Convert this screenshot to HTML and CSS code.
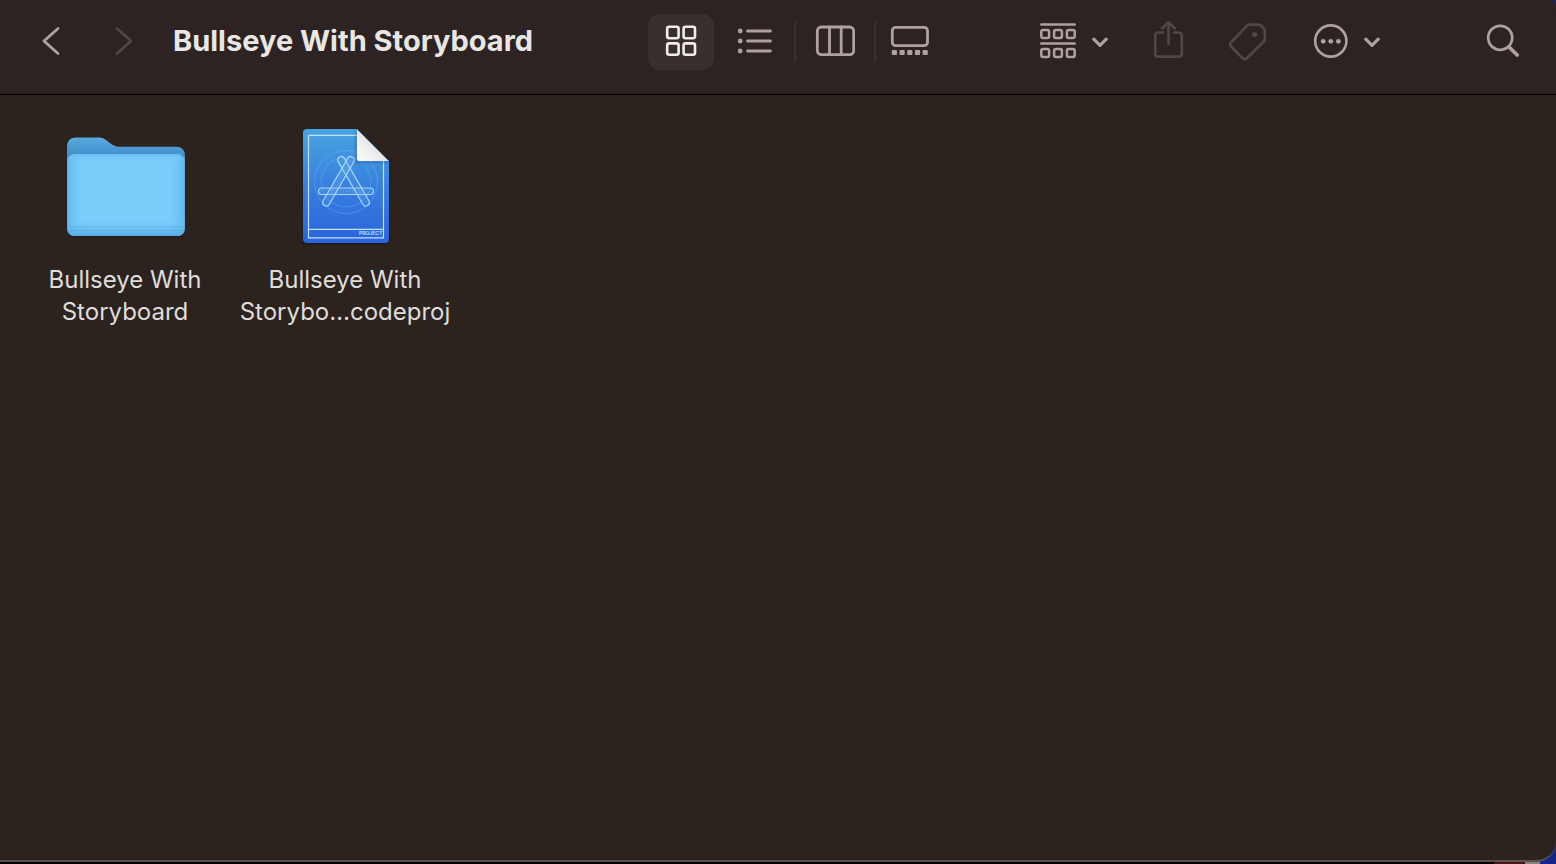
FILE: index.html
```html
<!DOCTYPE html>
<html lang="en">
<head>
<meta charset="utf-8">
<title>Bullseye With Storyboard</title>
<link rel="stylesheet" href="styles.css">
</head>
<body>
<main class="window">
  <header class="toolbar">
    <nav class="history" aria-label="History">
      <button class="tool nav-tool" aria-label="Back">
        <svg width="40" height="44" viewBox="0 0 40 44"><path d="M27 8.500L13 21L27 33.500" stroke-width="2.900"/></svg>
      </button>
      <button class="tool nav-tool" aria-label="Forward" disabled>
        <svg width="40" height="44" viewBox="0 0 40 44"><path d="M13 8.500L27 21L13 33.500" stroke-width="2.900"/></svg>
      </button>
    </nav>
    <h1 class="title">Bullseye With Storyboard</h1>
    <div class="views" role="group" aria-label="View">
      <button class="tool view-grid" aria-label="Icons" aria-pressed="true">
        <svg width="36" height="44" viewBox="0 0 36 44" stroke-width="2.600">
          <rect x="4.200" y="6.800" width="11.400" height="11.400" rx="2"/><rect x="20.600" y="6.800" width="11.400" height="11.400" rx="2"/>
          <rect x="4.200" y="23.400" width="11.400" height="11.400" rx="2"/><rect x="20.600" y="23.400" width="11.400" height="11.400" rx="2"/>
        </svg>
      </button>
      <button class="tool view-list" aria-label="List">
        <svg width="36" height="44" viewBox="0 0 36 44" stroke-width="2.800">
          <path d="M11.500 11H34.500M11.500 21H34.500M11.500 31H34.500"/>
          <g class="solid"><circle cx="4.200" cy="11" r="2.400"/><circle cx="4.200" cy="21" r="2.400"/><circle cx="4.200" cy="31" r="2.400"/></g>
        </svg>
      </button>
      <span class="divider"></span>
      <button class="tool view-columns" aria-label="Columns">
        <svg width="40" height="44" viewBox="0 0 40 44" stroke-width="2.800">
          <rect x="2.300" y="7" width="36.400" height="27.600" rx="4"/><path d="M14.500 7V34.500M26.200 7V34.500"/>
        </svg>
      </button>
      <span class="divider"></span>
      <button class="tool view-gallery" aria-label="Gallery">
        <svg width="40" height="44" viewBox="0 0 40 44" stroke-width="2.800">
          <rect x="2.300" y="7.300" width="35.200" height="18.400" rx="3.500"/>
          <g class="solid"><rect x="1.800" y="30" width="5.200" height="5" rx="1"/><rect x="9.500" y="30" width="5.200" height="5" rx="1"/><rect x="17.200" y="30" width="5.200" height="5" rx="1"/><rect x="24.900" y="30" width="5.200" height="5" rx="1"/><rect x="32.600" y="30" width="5.200" height="5" rx="1"/></g>
        </svg>
      </button>
    </div>
    <div class="actions">
      <button class="tool menu-tool" aria-label="Group by">
        <svg width="36" height="44" viewBox="0 0 36 44" stroke-width="2.500">
          <path d="M1.300 4.500H34.700M1.300 23.500H34.700"/>
          <rect x="1.300" y="10" width="7.800" height="8" rx="1.800"/><rect x="14.100" y="10" width="7.800" height="8" rx="1.800"/><rect x="26.900" y="10" width="7.800" height="8" rx="1.800"/>
          <rect x="1.300" y="29" width="7.800" height="8" rx="1.800"/><rect x="14.100" y="29" width="7.800" height="8" rx="1.800"/><rect x="26.900" y="29" width="7.800" height="8" rx="1.800"/>
        </svg>
        <svg width="16" height="44" viewBox="0 0 16 44" stroke-width="3.200"><path d="M1.800 19.200L8 25.400L14.200 19.200"/></svg>
      </button>
      <button class="tool share-tool" aria-label="Share" disabled>
        <svg width="42" height="44" viewBox="0 0 42 44" stroke-width="2.700">
          <path d="M15 12.500H10.500Q7.200 12.500 7.200 15.800V33.400Q7.200 36.700 10.500 36.700H30.500Q33.800 36.700 33.800 33.400V15.800Q33.800 12.500 30.500 12.500H26M20.500 24V2.800M14.300 8.200L20.500 2.200L26.700 8.200"/>
        </svg>
      </button>
      <button class="tool tag-tool" aria-label="Tags" disabled>
        <svg width="42" height="44" viewBox="0 0 42 44" stroke-width="2.700">
          <path d="M23.500 4.700H32.500Q34 4.700 35 5.700L37.800 8.500Q38.800 9.500 38.800 11V19Q38.800 20.500 37.800 21.500L20.800 38.200Q18.800 40.200 16.800 38.200L5 26.500Q3 24.500 5 22.500L21 5.700Q22 4.700 23.500 4.700Z"/>
          <circle class="solid" cx="28.500" cy="14.600" r="2.600"/>
        </svg>
      </button>
      <button class="tool menu-tool more-tool" aria-label="More actions">
        <svg width="34" height="44" viewBox="0 0 34 44" stroke-width="2.600">
          <circle cx="16.800" cy="21" r="15.600"/>
          <g class="solid"><circle cx="9.200" cy="21.300" r="2.400"/><circle cx="16.800" cy="21.300" r="2.400"/><circle cx="24.400" cy="21.300" r="2.400"/></g>
        </svg>
        <svg width="16" height="44" viewBox="0 0 16 44" stroke-width="3.200"><path d="M1.800 19.200L8 25.400L14.200 19.200"/></svg>
      </button>
      <button class="tool search-tool" aria-label="Search">
        <svg width="42" height="44" viewBox="0 0 42 44" stroke-width="2.700">
          <circle cx="18.200" cy="17.800" r="12"/><path d="M27 27L35.200 35" stroke-width="3.800"/>
        </svg>
      </button>
    </div>
  </header>
  <section class="files" aria-label="Files">
    <button class="file">
      <svg width="128" height="128" viewBox="0 0 128 128">
        <defs>
          <linearGradient id="back" x1="0" y1="0" x2="0" y2="1"><stop offset="0" stop-color="#59aadf"/><stop offset=".18" stop-color="#4390cc"/><stop offset="1" stop-color="#4390cc"/></linearGradient>
          <linearGradient id="sides"><stop offset="0" stop-color="#62b6ec"/><stop offset=".05" stop-color="#71c3f6"/><stop offset=".13" stop-color="#7dcdfc"/><stop offset=".87" stop-color="#7dcdfc"/><stop offset=".95" stop-color="#71c3f6"/><stop offset="1" stop-color="#62b6ec"/></linearGradient>
          <linearGradient id="front" x1="0" y1="0" x2="0" y2="1"><stop offset="0" stop-color="#69bcf0"/><stop offset=".1" stop-color="#7dcdfc" stop-opacity="0"/><stop offset=".78" stop-color="#7dcdfc" stop-opacity="0"/><stop offset="1" stop-color="#55aae2"/></linearGradient>
          <clipPath id="frontShape"><rect x="6.300" y="32" width="117.400" height="82" rx="7.500"/></clipPath>
        </defs>
        <rect class="shadow" x="7" y="34" width="116" height="81" rx="8"/>
        <path class="shape" fill="url(#back)" d="M6 25Q6 15.500 15 15.500H38C47 15.500 48 24.800 60 24.800H115Q124 24.800 124 34V106Q124 114 116 114H14Q6 114 6 106Z"/>
        <rect class="shape" fill="url(#sides)" x="6.300" y="32" width="117.400" height="82" rx="7.500"/>
        <rect class="shape" fill="url(#front)" x="6.300" y="32" width="117.400" height="82" rx="7.500"/>
        <g clip-path="url(#frontShape)"><path class="crease" d="M6 104.500H124M6 108.500H124"/></g>
      </svg>
      <span class="name">Bullseye With Storyboard</span>
    </button>
    <button class="file">
      <svg width="128" height="128" viewBox="0 0 128 128">
        <defs>
          <linearGradient id="paper" x1="0" y1="0" x2="0" y2="1"><stop offset="0" stop-color="#48a5df"/><stop offset=".5" stop-color="#387fdf"/><stop offset="1" stop-color="#2964dc"/></linearGradient>
          <linearGradient id="fold" x1="0" y1="1" x2=".6" y2=".4"><stop offset="0" stop-color="#fff"/><stop offset="1" stop-color="#e2e2e4"/></linearGradient>
          <clipPath id="sheet"><path d="M76 7L108 39V121H22V7Z"/></clipPath>
        </defs>
        <path class="shadow" d="M26 9H76L108 41V122H22V13Z"/>
        <path class="shape" fill="url(#paper)" d="M26 7H76L108 39V117Q108 121 104 121H26Q22 121 22 117V11Q22 7 26 7Z"/>
        <g clip-path="url(#sheet)">
          <g class="guide"><circle cx="65" cy="60" r="31.500"/><circle cx="65" cy="60" r="25"/></g>
          <path class="border" d="M76 13.300H28.500Q27.500 13.300 27.500 14.500V115.800H102.500V39M27.500 107.300H102.500"/>
        </g>
        <g class="sticks">
          <rect x="37.500" y="66" width="55" height="6.500" rx="3.250"/>
          <rect x="69.100" y="31.300" width="7" height="56" rx="3.500" transform="rotate(-30 72.600 59.300)"/>
          <rect x="54" y="31.300" width="7" height="56" rx="3.500" transform="rotate(30 57.500 59.300)"/>
        </g>
        <path class="ticks" d="M50 69.200H80M49 74L69 39.500M81 74L75 63.500"/>
        <path class="fold-shadow" d="M75 9V40H107"/>
        <path class="shape" fill="url(#fold)" d="M76 7.500L107.500 39H78.500Q76 39 76 36.500Z"/>
        <text class="stamp" x="78" y="113.300">PROJECT</text>
      </svg>
      <span class="name">Bullseye With Storybo…codeproj</span>
    </button>
  </section>
</main>
</body>
</html>
```

FILE: styles.css
```css
* { box-sizing: border-box; }

body {
  margin: 0;
  min-height: 100vh;
  background: linear-gradient(90deg, #000 96%, #4a1512 96%, #4a1512 98%, #83807f 98%, #83807f 99%, #17258a 99%);
  color: #dfdddb;
  font-family: Inter, "Noto Sans", sans-serif;
}

.window {
  display: flex;
  flex-direction: column;
  min-height: calc(100vh - 2px);
  overflow: hidden;
  border-bottom: 2px solid #5b514d;
  border-radius: 0 4px 20px 0 / 0 12px 20px 0;
  background: #2c231f;
}

.toolbar {
  display: flex;
  align-items: center;
  padding: 14px 32px 24px 31px;
  border-bottom: 1px solid #000;
  background: #2c2322;
}

.history { display: flex; gap: 33px; }

.title {
  flex: 1;
  margin: 0 0 0 29px;
  padding-bottom: 2px;
  color: #e8e7e5;
  font-size: 29px;
  font-weight: 700;
  line-height: 40px;
  white-space: nowrap;
}

.views, .actions { display: flex; align-items: center; }
.actions { margin-left: 86px; }

.tool {
  display: flex;
  align-items: center;
  justify-content: center;
  height: 56px;
  padding: 0;
  border: 0;
  border-radius: 12px;
  background: none;
  color: #aea19e;
}
.tool:disabled { color: #504643; }

.tool svg {
  display: block;
  flex: none;
  fill: none;
  stroke: currentColor;
  stroke-linecap: round;
  stroke-linejoin: round;
}
.tool .solid { fill: currentColor; stroke: none; }

.nav-tool { width: 40px; }
.view-grid { width: 66px; background: #39302e; color: #f0eeed; }
.view-list { width: 80px; }
.view-columns { width: 78px; }
.view-gallery { width: 68px; }
.menu-tool { gap: 16px; padding: 0 10px; }
.share-tool { width: 42px; margin-left: 30px; }
.tag-tool { width: 42px; margin-left: 36px; }
.more-tool { margin-left: 36px; }
.search-tool { width: 42px; margin-left: 92px; }

.divider { width: 2px; height: 40px; background: #3a312f; }

.files {
  display: flex;
  flex: 1;
  flex-wrap: wrap;
  align-items: flex-start;
  padding: 27px 15px;
}

.file {
  display: flex;
  flex-direction: column;
  align-items: center;
  gap: 14px;
  width: 220px;
  padding: 0;
  border: 0;
  background: none;
  color: inherit;
  font: inherit;
}

.name {
  width: 100%;
  font-size: 24px;
  line-height: 32px;
}

.shape { stroke: none; }
.shadow { fill: #000; opacity: .35; filter: blur(1px); }
.crease { fill: none; stroke: #4ea3dc; stroke-opacity: .4; stroke-width: 1; }
.guide { fill: none; stroke: #7fc4f4; stroke-opacity: .35; stroke-width: 1; }
.border { fill: none; stroke: #c3e1f8; stroke-width: 1.2; }
.sticks { fill: #6ab4ee; fill-opacity: .2; stroke: #a9d6f7; stroke-width: 1.2; }
.ticks { fill: none; stroke: #a9d6f7; stroke-opacity: .2; stroke-width: 4; stroke-dasharray: 1 2; }
.fold-shadow { fill: none; stroke: #1d4a8c; stroke-opacity: .4; stroke-width: 2; filter: blur(1px); }
.stamp { fill: #c3e1f8; font-size: 5px; font-weight: 600; }
```
